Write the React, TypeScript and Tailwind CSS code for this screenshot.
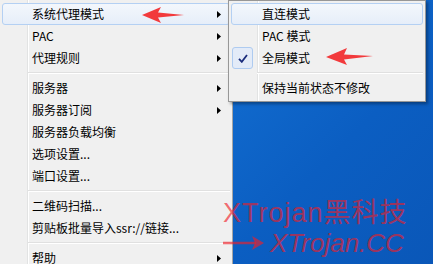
import React from "react";

function Arrow() {
  return (
    <svg width="4" height="7" viewBox="0 0 4 7" className="mr-[8px] shrink-0">
      <polygon points="0,0 4,3.5 0,7" fill="#000" />
    </svg>
  );
}

function Item({ label, arrow, active }: { label: string; arrow?: boolean; active?: boolean }) {
  return (
    <div
      className={
        active
          ? "flex h-[22px] items-center rounded-[3px] border border-[#b4d0f3] bg-[linear-gradient(#f3f7fc,#e6eef9)]"
          : "flex h-[22px] items-center rounded-[3px] border border-transparent"
      }
    >
      <span className="flex-1 pl-[29px] whitespace-nowrap">{label}</span>
      {arrow && <Arrow />}
    </div>
  );
}

function Sep() {
  return (
    <div className="flex h-[8px] items-center pl-[26px]">
      <div className="h-[2px] flex-1 border-t border-b border-t-[#e0e0e0] border-b-white" />
    </div>
  );
}

function SubItem({ label, active, checked }: { label: string; active?: boolean; checked?: boolean }) {
  return (
    <div
      className={
        active
          ? "flex h-[22px] items-center rounded-[3px] border border-[#b4d0f3] bg-[linear-gradient(#f3f7fc,#e6eef9)]"
          : "flex h-[22px] items-center rounded-[3px] border border-transparent"
      }
    >
      <div className="flex w-[30px] shrink-0 items-center">
        {checked && (
          <div className="flex h-[22px] w-[21px] items-center justify-center rounded-[3px] border border-[#aecbf0] bg-[#e3ebf8]">
            <svg width="10" height="9" viewBox="0 0 10 9">
              <path d="M1 4.8 L3.8 7.8 L9 1" stroke="#1a2c7c" strokeWidth="1.8" fill="none" />
            </svg>
          </div>
        )}
      </div>
      <span className="whitespace-nowrap">{label}</span>
    </div>
  );
}

export default function App() {
  return (
    <div className="relative h-[264px] w-[433px] overflow-hidden bg-[linear-gradient(135deg,#1b80e2,#0b5ec2_70%,#0a57b8)] font-['Noto_Sans_CJK_SC','Liberation_Sans',sans-serif] text-[12px] text-black">
      {/* main menu */}
      <div className="h-[280px] w-[233px] border-r border-[#a5a5a5] bg-[linear-gradient(to_right,#f0f0f0_27px,#e2e3e3_27px,#e2e3e3_28px,#ffffff_28px,#ffffff_29px,#f0f0f0_29px)] px-[2px] pt-[3px]">
        <Item label="系统代理模式" arrow active />
        <Item label="PAC" arrow />
        <Item label="代理规则" arrow />
        <Sep />
        <Item label="服务器" arrow />
        <Item label="服务器订阅" arrow />
        <Item label="服务器负载均衡" />
        <Item label="选项设置..." />
        <Item label="端口设置..." />
        <Sep />
        <Item label="二维码扫描..." />
        <Item label="剪贴板批量导入ssr://链接..." />
        <Sep />
        <Item label="帮助" arrow />
      </div>

      {/* submenu */}
      <div className="absolute left-[228px] top-0 h-[102px] w-[198px] border border-[#979797] bg-[linear-gradient(to_right,#f0f0f0_28px,#e2e3e3_28px,#e2e3e3_29px,#ffffff_29px,#ffffff_30px,#f0f0f0_30px)] px-[2px] pt-[2px] shadow-[2px_2px_3px_rgba(0,0,0,0.35)]">
        <SubItem label="直连模式" active />
        <SubItem label="PAC 模式" />
        <SubItem label="全局模式" checked />
        <Sep />
        <SubItem label="保持当前状态不修改" />
      </div>

      {/* red arrows */}
      <svg className="absolute left-[142px] top-[7px]" width="42" height="16" viewBox="0 0 42 16">
        <polygon points="0,8 19,0 16,5.5 42,8 16,10.5 19,16" fill="#f23a3c" />
      </svg>
      <svg className="absolute left-[326px] top-[48px]" width="47" height="17" viewBox="0 0 47 17">
        <polygon points="0,9 21,0 18,6.5 47,8 18,11.5 21,17" fill="#f23a3c" />
      </svg>

      {/* watermark */}
      <div className="absolute left-[223px] top-[200px] whitespace-nowrap text-[27px] leading-none tracking-[1px] text-[rgba(240,30,40,0.65)] font-['Liberation_Sans','Noto_Sans_CJK_SC',sans-serif]">
        XTrojan黑科技
      </div>
      <svg className="absolute left-[222px] top-[235px]" width="44" height="16" viewBox="0 0 44 16">
        <line x1="1" y1="8" x2="34" y2="8" stroke="rgba(240,30,40,0.65)" strokeWidth="2.5" />
        <polygon points="30,1 42,8 30,15 33,8" fill="rgba(240,30,40,0.65)" />
      </svg>
      <div className="absolute left-[270px] top-[230px] whitespace-nowrap text-[26px] italic leading-none text-[rgba(240,30,40,0.65)] font-['Liberation_Sans',sans-serif]">
        XTrojan.CC
      </div>
    </div>
  );
}
